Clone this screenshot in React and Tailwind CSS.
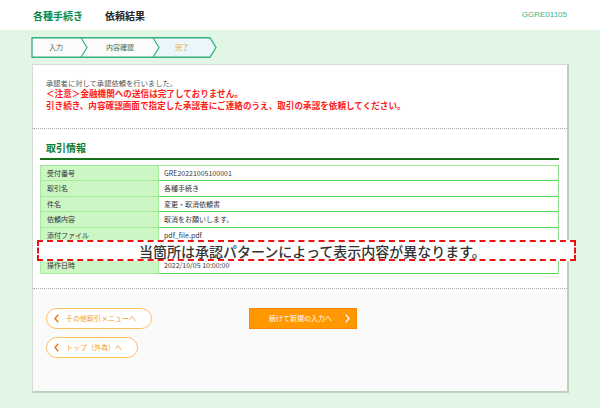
import React from "react";

const rows = [
  ["受付番号", "GRE20221005100001"],
  ["取引名", "各種手続き"],
  ["件名", "変更・取消依頼書"],
  ["依頼内容", "取消をお願いします。"],
  ["添付ファイル", "pdf_file.pdf"],
  ["", ""],
  ["操作日時", "2022/10/05 10:00:00"],
];

function Breadcrumb() {
  return (
    <div className="relative w-[186px] h-[21px] ml-[31px]">
      <svg className="absolute inset-0" width="186" height="21" viewBox="0 0 186 21">
        <polygon points="1,0.75 179,0.75 185,10.5 179,20.25 1,20.25" fill="#fbfbfb" />
        <polygon points="122,0.75 179,0.75 185,10.5 179,20.25 122,20.25 128,10.5" fill="#eaf6fb" />
        <polygon points="1,0.75 179,0.75 185,10.5 179,20.25 1,20.25" fill="none" stroke="#34b07e" strokeWidth="1.3" />
        <polyline points="50,0.75 56,10.5 50,20.25" fill="none" stroke="#34b07e" strokeWidth="1.2" />
        <polyline points="122,0.75 128,10.5 122,20.25" fill="none" stroke="#34b07e" strokeWidth="1.2" />
      </svg>
      <div className="relative flex h-full items-center text-[7px] leading-none">
        <div className="w-[50px] text-center text-[#3f6c55]">入力</div>
        <div className="w-[78px] text-center text-[#3f6c55]">内容確認</div>
        <div className="w-[46px] text-center text-[#f5a02a]">完了</div>
      </div>
    </div>
  );
}

function Chevron({ dir, color, className }) {
  return (
    <svg width="5" height="9" viewBox="0 0 5 9" className={className}>
      <polyline
        points={dir === "left" ? "4.2,0.8 1,4.5 4.2,8.2" : "0.8,0.8 4,4.5 0.8,8.2"}
        fill="none"
        stroke={color}
        strokeWidth="1.3"
      />
    </svg>
  );
}

export default function App() {
  return (
    <div
      className="w-[600px] h-[408px] overflow-hidden bg-[#e1f6e5]"
      style={{ fontFamily: '"Noto Sans CJK JP", "Noto Sans", sans-serif' }}
    >
      <div className="h-[30px] bg-white flex items-center">
        <div className="ml-[33px] text-[10px] font-bold text-[#0c8a4c]">各種手続き</div>
        <div className="ml-[22px] text-[10px] font-bold text-[#262626]">依頼結果</div>
        <div className="ml-auto mr-[33px] text-[8px] text-[#3db489]" style={{ fontFamily: '"Liberation Sans", sans-serif' }}>
          GGRE01105
        </div>
      </div>

      <div className="pt-[7px]">
        <Breadcrumb />

        <div className="relative ml-[32px] mt-[6px] w-[537px] h-[329px] bg-white border border-[#d4dcd4] border-r-[2px] border-b-[2px] border-r-[#bcd2bc] border-b-[#bcd2bc] flex flex-col">
          <div className="px-[13px] pt-[13px] h-[63px]">
            <div className="text-[7.3px] leading-[10px] text-[#555]">承認者に対して承認依頼を行いました。</div>
            <div className="text-[8.6px] leading-[11px] font-bold text-[#ff1a1a]">＜注意＞金融機関への送信は完了しておりません。</div>
            <div className="text-[8.6px] leading-[13px] font-bold text-[#ff1a1a]">
              引き続き、内容確認画面で指定した承認者にご連絡のうえ、取引の承認を依頼してください。
            </div>
          </div>
          <div className="border-t border-dotted border-[#aaaaaa]" />

          <div className="h-[159px]">
            <div className="pl-[13px] pt-[12px] text-[10px] leading-[14px] font-bold text-[#137a2a]">取引情報</div>
            <div className="ml-[7px] mr-[8px] mt-[3px] h-[2px] bg-[#17711a]" />
            <div className="ml-[7px] mr-[8px] mt-[5px] border-t border-[#9fe59a] border-r border-r-[#8ee08e] border-l border-l-[#a6eb9c]">
              {rows.map(([k, v], i) => (
                <div key={i} className="flex h-[15.4px] text-[7px] text-[#333]">
                  <div className="w-[118px] bg-[#ccf6c4] border-b border-r border-[#a6eb9c] pl-[6px] flex items-center">{k}</div>
                  <div className="flex-1 border-b border-[#56d556] pl-[5px] flex items-center">{v}</div>
                </div>
              ))}
            </div>
          </div>

          <div className="border-t border-dotted border-[#aaaaaa]" />
          <div className="flex-1 bg-[#fafafa] pl-[13px] pt-[19px] flex items-start">
            <div className="flex flex-col gap-[8px]">
              <div className="w-[106px] h-[21px] rounded-full border border-[#ffbd5c] bg-white flex items-center">
                <Chevron dir="left" color="#f07000" className="ml-[7px]" />
                <span className="ml-[7px] text-[7px] text-[#f39a1f]">その他取引メニューへ</span>
              </div>
              <div className="w-[92px] h-[21px] rounded-full border border-[#ffbd5c] bg-white flex items-center">
                <Chevron dir="left" color="#f07000" className="ml-[7px]" />
                <span className="ml-[7px] text-[7px] text-[#f39a1f]">トップ（外為）へ</span>
              </div>
            </div>
            <div className="ml-[97px] w-[108px] h-[21px] bg-[#ff9800] border border-dotted border-[#f07a00] flex items-center">
              <span className="ml-[19px] text-[7px] text-white">続けて新規の入力へ</span>
              <Chevron dir="right" color="#ffffff" className="ml-[13px]" />
            </div>
          </div>

          <div className="absolute left-[4px] top-[175px] w-[539px] h-[21px] bg-white border-2 border-dashed border-[#ee1111] flex items-center pl-[100px]">
            <span className="text-[14px] leading-none font-medium text-[#333] whitespace-nowrap">
              当箇所は承認パターンによって表示内容が異なります。
            </span>
          </div>
        </div>
      </div>
    </div>
  );
}
